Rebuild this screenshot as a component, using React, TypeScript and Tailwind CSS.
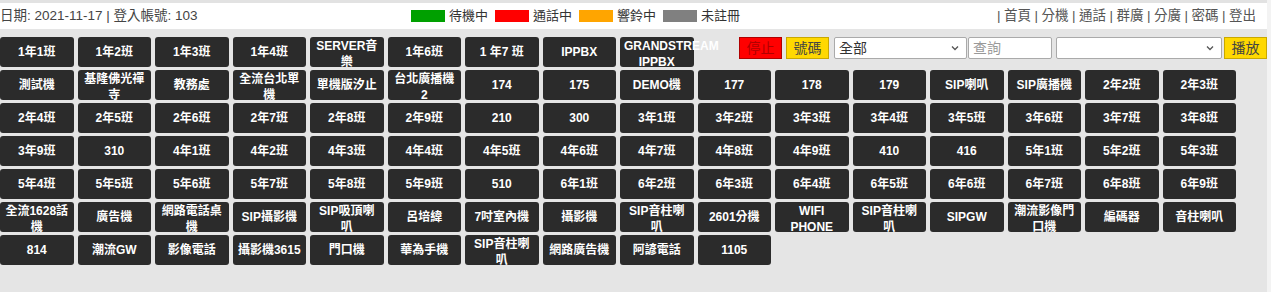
import React from "react";

const row1 = ["1年1班", "1年2班", "1年3班", "1年4班", "SERVER音樂", "1年6班", "1 年7 班", "IPPBX", "GRANDSTREAM IPPBX"];
const rest = [
  "測試機", "基隆佛光禪寺", "教務處", "全流台北單機", "單機版汐止", "台北廣播機2", "174", "175", "DEMO機", "177", "178", "179", "SIP喇叭", "SIP廣播機", "2年2班", "2年3班",
  "2年4班", "2年5班", "2年6班", "2年7班", "2年8班", "2年9班", "210", "300", "3年1班", "3年2班", "3年3班", "3年4班", "3年5班", "3年6班", "3年7班", "3年8班",
  "3年9班", "310", "4年1班", "4年2班", "4年3班", "4年4班", "4年5班", "4年6班", "4年7班", "4年8班", "4年9班", "410", "416", "5年1班", "5年2班", "5年3班",
  "5年4班", "5年5班", "5年6班", "5年7班", "5年8班", "5年9班", "510", "6年1班", "6年2班", "6年3班", "6年4班", "6年5班", "6年6班", "6年7班", "6年8班", "6年9班",
  "全流1628話機", "廣告機", "網路電話桌機", "SIP攝影機", "SIP吸頂喇叭", "呂培緯", "7吋室內機", "攝影機", "SIP音柱喇叭", "2601分機", "WIFI PHONE", "SIP音柱喇叭", "SIPGW", "潮流影像門口機", "編碼器", "音柱喇叭",
  "814", "潮流GW", "影像電話", "攝影機3615", "門口機", "華為手機", "SIP音柱喇叭", "網路廣告機", "阿諺電話", "1105",
];

const font = "font-['Liberation_Sans','Noto_Sans_CJK_TC',sans-serif]";

function Btn({ label }: { label: string }) {
  return (
    <div className="flex h-[30px] w-[73.5px] shrink-0 [align-items:safe_center] rounded-[3px] bg-[#2b2b2b] px-[4px] py-[1px]">
      <div className="w-full text-center text-[12px] font-bold leading-[16px] text-white">{label}</div>
    </div>
  );
}

function Chevron() {
  return (
    <svg width="10" height="10" viewBox="0 0 10 10" className="text-[#555]">
      <path d="M2 3.5 L5 6.5 L8 3.5" fill="none" stroke="currentColor" strokeWidth="1.3" />
    </svg>
  );
}

export default function App() {
  const legend = [
    { c: "bg-[#00a000]", t: "待機中" },
    { c: "bg-[#ff0000]", t: "通話中" },
    { c: "bg-[#ffa500]", t: "響鈴中" },
    { c: "bg-[#808080]", t: "未註冊" },
  ];
  const nav = ["首頁", "分機", "通話", "群廣", "分廣", "密碼", "登出"];
  return (
    <div className={`flex h-[292px] w-[1271px] bg-[#f3f3f3] ${font}`}>
      <div className="flex w-[1267px] flex-col">
        <div className="h-[3px] bg-[#e2e2e2]" />
        <div className="flex h-[26px] items-center bg-white text-[13.5px] text-[#444]">
          <div className="w-[411px] whitespace-nowrap">日期: 2021-11-17 | 登入帳號: 103</div>
          <div className="flex items-center">
            {legend.map((l) => (
              <div key={l.t} className="mr-[7px] flex items-center">
                <div className={`mr-[4px] h-[12px] w-[34px] ${l.c}`} />
                <span className="w-[39px] text-[13px] text-[#333]">{l.t}</span>
              </div>
            ))}
          </div>
          <div className="ml-auto mr-[11px] flex items-center whitespace-nowrap text-[13.5px] text-[#555]">
            {nav.map((n) => (
              <span key={n}>
                <span className="mx-[3.5px]">|</span>
                <span>{n}</span>
              </span>
            ))}
          </div>
        </div>
        <div className="flex-1 bg-[#e5e5e5] pt-[8px]">
          <div className="flex items-start">
            <div className="flex gap-x-[4px]">
              {row1.map((l, i) => (
                <Btn key={i} label={l} />
              ))}
            </div>
            <div className="ml-auto flex items-center text-[14px]">
              <div className="flex h-[22px] w-[43px] items-center justify-center border border-[#b00000] bg-[#ff0000] text-[#b00000]">停止</div>
              <div className="ml-[4px] flex h-[22px] w-[43px] items-center justify-center border border-[#c9a800] bg-[#ffd800] text-[#444]">號碼</div>
              <div className="ml-[5px] flex h-[22px] w-[133px] items-center justify-between rounded-[2px] border border-[#aaa] bg-white pl-[4px] pr-[6px] text-[#333]">
                <span>全部</span>
                <Chevron />
              </div>
              <div className="ml-[1px] flex h-[22px] w-[84px] items-center rounded-[2px] border border-[#aaa] bg-white pl-[4px] text-[#999]">查詢</div>
              <div className="ml-[4px] flex h-[22px] w-[166px] items-center justify-end rounded-[2px] border border-[#aaa] bg-white pr-[6px]">
                <Chevron />
              </div>
              <div className="ml-[2px] flex h-[22px] w-[43px] items-center justify-center border border-[#c9a800] bg-[#ffd800] text-[#444]">播放</div>
            </div>
          </div>
          <div className="mt-[3px] flex flex-wrap gap-x-[4px] gap-y-[3px]">
            {rest.map((l, i) => (
              <Btn key={i} label={l} />
            ))}
          </div>
        </div>
      </div>
    </div>
  );
}
